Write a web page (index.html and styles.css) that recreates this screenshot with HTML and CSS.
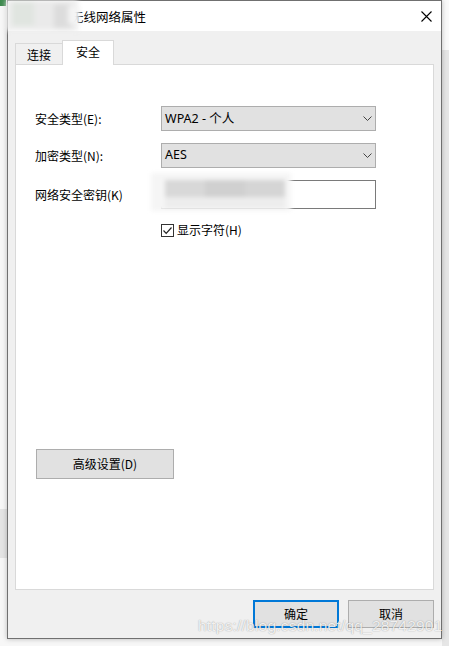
FILE: index.html
```html
<!DOCTYPE html>
<html lang="zh-CN">
<head>
<meta charset="utf-8">
<title>无线网络属性</title>
<link rel="stylesheet" href="styles.css">
</head>
<body>
<div class="corner-icon"></div>
<div class="window">
  <div class="titlebar">
    <span class="title">无线网络属性</span>
    <svg class="close" width="11" height="11" viewBox="0 0 11 11"><path d="M0.5 0.5L10.5 10.5M10.5 0.5L0.5 10.5" stroke="#000" stroke-width="1.1" fill="none"/></svg>
    <div class="title-blur"><i class="b1"></i><i class="b2"></i><i class="b3"></i><i class="b4"></i></div>
  </div>
  <div class="body">
    <div class="tabs">
      <div class="tab">连接</div>
      <div class="tab active">安全</div>
    </div>
    <div class="panel">
      <div class="form">
        <label class="label">安全类型(E):</label>
        <div class="select s1"><span>WPA2 - 个人</span><svg width="9" height="5" viewBox="0 0 9 5"><path d="M0.5 0.5L4.5 4.5L8.5 0.5" stroke="#444" stroke-width="1" fill="none"/></svg></div>
        <label class="label">加密类型(N):</label>
        <div class="select s2"><span>AES</span><svg width="9" height="5" viewBox="0 0 9 5"><path d="M0.5 0.5L4.5 4.5L8.5 0.5" stroke="#444" stroke-width="1" fill="none"/></svg></div>
        <label class="label">网络安全密钥(K)</label>
        <div class="input"></div>
      </div>
      <div class="check-row">
        <span class="checkbox"><svg width="11" height="11" viewBox="0 0 11 11"><path d="M1.5 5.5L4.2 8.3L9.5 2.5" stroke="#222" stroke-width="1.2" fill="none"/></svg></span>
        <span>显示字符(H)</span>
      </div>
      <button class="btn adv">高级设置(D)</button>
      <div class="key-blur"><i class="k1"></i><i class="k2"></i><i class="k3"></i><i class="k4"></i></div>
    </div>
    <div class="actions">
      <button class="btn primary">确定</button>
      <button class="btn">取消</button>
    </div>
  </div>
</div>
<div class="watermark">https://blog.csdn.net/qq_28742901</div>
</body>
</html>
```
FILE: styles.css
```css
* { box-sizing: border-box; }
html, body { margin: 0; padding: 0; }
body {
  width: 449px;
  height: 646px;
  overflow: hidden;
  position: relative;
  font-family: "Noto Sans", "Noto Sans CJK SC", sans-serif;
  font-size: 12px;
  color: #000;
  background:
    linear-gradient(#e4e4e4, #e4e4e4) 0 509px / 7px 49px no-repeat,
    linear-gradient(to bottom, #fafafa 50px, #e6e6e6 50px) right top / 7px 100% no-repeat,
    #f7f7f7;
}
.corner-icon {
  position: absolute;
  left: 0; top: 0;
  width: 6px; height: 6px;
  background: #3d8a4e;
}
.window {
  margin-left: 7px;
  width: 435px;
  height: 639px;
  border: 1px solid #707070;
  background: #f0f0f0;
  box-shadow: 0 0 5px rgba(0,0,0,0.25);
  display: flex;
  flex-direction: column;
  position: relative;
}
.titlebar {
  height: 30px;
  background: #fff;
  display: flex;
  align-items: center;
  padding-left: 63px;
  padding-right: 9px;
  position: relative;
  flex: none;
}
.title { font-family: "Noto Sans CJK SC", sans-serif; font-size: 12.5px; line-height: 16px; flex: 1; margin-top: 1px; }
.title-blur {
  position: absolute;
  left: -2px; top: -1px;
  width: 72px; height: 31px;
  background: #eeeeee;
  filter: blur(2.5px);
}
.title-blur i { position: absolute; display: block; }
.title-blur .b1 { left: 6px; top: 2px; width: 22px; height: 24px; background: #e0e5e0; }
.title-blur .b2 { left: 28px; top: 2px; width: 20px; height: 26px; background: #eaeaea; }
.title-blur .b3 { left: 48px; top: 4px; width: 18px; height: 24px; background: #dcdcdc; }
.title-blur .b4 { left: 62px; top: 6px; width: 12px; height: 18px; background: #f4f4f4; }
.body {
  flex: 1;
  padding: 9px 7px 10px 7px;
  display: flex;
  flex-direction: column;
}
.tabs {
  display: flex;
  align-items: flex-end;
  height: 24px;
  flex: none;
  position: relative;
  z-index: 2;
}
.tab {
  font-family: "Noto Sans CJK SC", sans-serif;
  height: 21px;
  width: 48px;
  border: 1px solid #d9d9d9;
  border-bottom: none;
  background: #f0f0f0;
  display: flex;
  align-items: center;
  justify-content: center;
  line-height: 16px;
  padding-top: 1px;
}
.tab.active {
  height: 25px;
  width: 52px;
  margin-left: -1px;
  margin-bottom: -1px;
  background: #fff;
  padding-bottom: 4px;
}
.panel {
  height: 526px;
  border: 1px solid #d9d9d9;
  background: #fff;
  flex: none;
  padding: 41px 0 0 19px;
  position: relative;
}
.form {
  display: grid;
  grid-template-columns: 126px 215px;
  grid-template-rows: 25px 25px 29px;
  row-gap: 12px;
  align-items: center;
}
.form .s2 { margin-top: -1px; }
.label { font-family: "Noto Sans CJK SC", sans-serif; line-height: 16px; margin-top: 1px; }
.select {
  height: 25px;
  background: #e1e1e1;
  border: 1px solid #adadad;
  display: flex;
  align-items: center;
  justify-content: space-between;
  padding: 0 3px 0 3px;
  font-size: 12.5px;
}
.select span { line-height: 16px; }
.input {
  height: 29px;
  border: 1px solid #7a7a7a;
  background: #fff;
}
.check-row {
  display: flex;
  align-items: center;
  gap: 3px;
  margin-top: 14px;
  margin-left: 126px;
  height: 14px;
  line-height: 16px;
  font-family: "Noto Sans CJK SC", sans-serif;
}
.checkbox {
  width: 13px; height: 13px;
  border: 1px solid #333;
  background: #fff;
  display: flex;
  align-items: center;
  justify-content: center;
}
.btn {
  font-family: "Noto Sans CJK SC", sans-serif;
  font-size: 12px;
  color: #000;
  background: #e1e1e1;
  border: 1px solid #adadad;
  height: 28px;
  width: 86px;
  padding: 0;
  line-height: 16px;
}
.adv {
  display: block;
  width: 138px;
  height: 30px;
  margin: 212px 0 0 1px;
}
.key-blur {
  position: absolute;
  left: 135px; top: 108px;
  width: 140px; height: 38px;
  background: #f5f5f5;
  filter: blur(2px);
}
.key-blur i { position: absolute; display: block; }
.key-blur .k1 { left: 14px; top: 7px; width: 40px; height: 17px; background: #d8d8d8; }
.key-blur .k2 { left: 54px; top: 7px; width: 40px; height: 17px; background: #d0d0d0; }
.key-blur .k3 { left: 94px; top: 7px; width: 40px; height: 17px; background: #d5d5d5; }
.key-blur .k4 { left: 14px; top: 24px; width: 120px; height: 11px; background: #ededed; }
.actions {
  display: flex;
  justify-content: flex-end;
  gap: 9px;
  margin-top: 10px;
  flex: none;
}
.primary {
  border: 2px solid #0078d7;
}
.watermark {
  position: absolute;
  left: 198px;
  top: 617px;
  font-family: "Liberation Sans", sans-serif;
  font-size: 15.5px;
  letter-spacing: 0.2px;
  color: rgba(255,255,255,0.85);
  text-shadow: 0 0 1px rgba(0,0,0,0.3), 0 0 2px rgba(0,0,0,0.12);
  white-space: nowrap;
}
```
